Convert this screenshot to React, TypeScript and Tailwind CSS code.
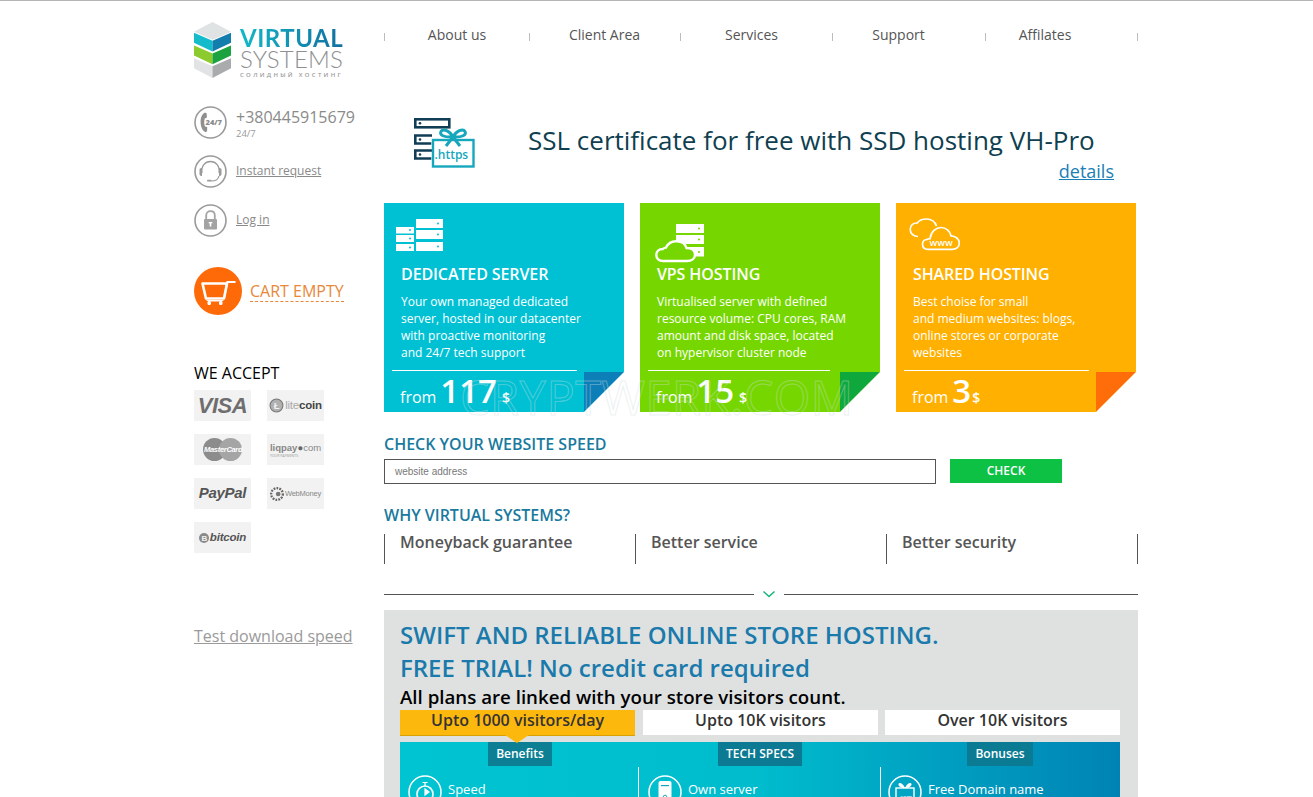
import React from "react";

const Cube = () => (
  <svg width="38" height="56" viewBox="0 0 38 57" preserveAspectRatio="none" className="shrink-0">
    <polygon points="18.5,0 37,10 18.5,18 0,10" fill="#dfe3e4" />
    <polygon points="0,11 18.5,19 18.5,30 0,21" fill="#14bccb" />
    <polygon points="37,11 18.5,19 18.5,30 37,21" fill="#137dae" />
    <polygon points="0,24 18.5,32 18.5,43 0,34" fill="#8ccb2e" />
    <polygon points="37,24 18.5,32 18.5,43 37,34" fill="#1ca23e" />
    <polygon points="0,37 18.5,45 18.5,57 0,47" fill="#e2e3e4" />
    <polygon points="37,37 18.5,45 18.5,57 37,47" fill="#a9abad" />
  </svg>
);

const Ring = ({ children }: { children: React.ReactNode }) => (
  <svg width="33" height="33" viewBox="0 0 33 33" className="shrink-0">
    <circle cx="16.5" cy="16.5" r="15.5" fill="none" stroke="#9a9a9a" strokeWidth="1.6" />
    {children}
  </svg>
);

const PhoneIcon = () => (
  <Ring>
    <path d="M11 6.500c-3.200 1.600-4.600 5.600-4.400 10 .2 4.600 1.900 8.400 4.900 9.700l1.600-.9.1-4.200-2.200-.7c-.9-1.800-1.100-5.800-.2-8l2.100-.8-.2-4.200z" fill="#8f8f8f" />
    <text x="11.500" y="19" fontSize="7.500" fontWeight="800" fill="#8a8a8a" fontFamily="'Open Sans',sans-serif">24/7</text>
  </Ring>
);

const HeadsetIcon = () => (
  <Ring>
    <path d="M8 18c-1-7 3-11.500 8.500-11.500S26 11 25 18" fill="none" stroke="#9a9a9a" strokeWidth="1.300" />
    <path d="M5.500 14.500c0-1 1-1.500 2.500-1.500v8c-1.500 0-2.500-.8-2.500-1.800zM27.500 14.500c0-1-1-1.500-2.500-1.500v8c1.500 0 2.500-.8 2.500-1.800z" fill="#9a9a9a" />
    <path d="M25 21c-.5 3-3.500 5-8 5" fill="none" stroke="#9a9a9a" strokeWidth="1.200" />
    <rect x="13" y="24.800" width="4.500" height="1.800" rx=".9" fill="#9a9a9a" />
  </Ring>
);

const LockIcon = () => (
  <Ring>
    <path d="M12.200 15v-3.500c0-2.600 1.800-4.300 4.300-4.300s4.300 1.700 4.300 4.300V15" fill="none" stroke="#a3a3a3" strokeWidth="1.800" />
    <rect x="10" y="15" width="13" height="10.500" rx="1" fill="#a3a3a3" />
    <rect x="15.700" y="18" width="1.600" height="4.500" fill="#fff" />
    <rect x="14.700" y="18" width="3.600" height="1.400" fill="#fff" />
  </Ring>
);

const CartIcon = () => (
  <svg width="48" height="48" viewBox="0 0 48 48" className="shrink-0">
    <circle cx="24" cy="24" r="24" fill="#ff6a08" />
    <path d="M8.500 16.500h24.500l-3 15H12z" fill="none" stroke="#fff" strokeWidth="2.600" strokeLinejoin="round" />
    <path d="M30 31.500l3.300-16.500h8.200" fill="none" stroke="#fff" strokeWidth="1.800" />
    <path d="M12 33h18l-2 1.500H14z" fill="#fff" />
    <rect x="13.500" y="34" width="3.500" height="4" rx="1.500" fill="#fff" />
    <rect x="25" y="34" width="3.500" height="4" rx="1.500" fill="#fff" />
  </svg>
);

const Tile = ({ children }: { children: React.ReactNode }) => (
  <div className="flex h-[31px] w-[57px] items-center justify-center overflow-hidden bg-[#f2f2f2] text-[#6f6f6f]">{children}</div>
);

const Logos = () => (
  <div className="mt-[7px] grid grid-cols-[57px_57px] gap-x-[16px] gap-y-[13px]">
    <Tile>
      <span className="font-['Liberation_Sans',sans-serif] text-[22px] font-bold italic tracking-[-0.5px] text-[#6e6e6e]">VISA</span>
    </Tile>
    <Tile>
      <svg width="15" height="15" viewBox="0 0 14 14" className="shrink-0">
        <circle cx="7" cy="7" r="6" fill="#b0b0b0" stroke="#777" />
        <text x="4.500" y="10.500" fontSize="9" fontWeight="700" fill="#f2f2f2" fontFamily="'Liberation Sans',sans-serif">Ł</text>
      </svg>
      <span className="ml-[1px] font-['Liberation_Sans',sans-serif] text-[11.500px] font-bold tracking-[-0.2px] text-[#444]"><span className="font-normal text-[#aaa]">lite</span>coin</span>
    </Tile>
    <Tile>
      <div className="relative flex h-[23px] w-[39px]">
        <span className="h-[23px] w-[23px] rounded-full bg-[#8c8c8c]" />
        <span className="-ml-[7px] h-[23px] w-[23px] rounded-full bg-[#a5a5a5]" />
        <span className="absolute left-[1px] top-[6px] font-['Liberation_Sans',sans-serif] text-[7.500px] font-bold italic tracking-[-0.3px] text-white">MasterCard</span>
      </div>
    </Tile>
    <Tile>
      <div className="flex flex-col items-start">
        <span className="font-['Liberation_Sans',sans-serif] text-[9.500px] leading-[11px] text-[#888]"><span className="font-bold">liqpay</span><span className="text-[#666]">●</span>com</span>
        <span className="text-[3.500px] leading-[5px] text-[#999]">YOUR PAYMENTS</span>
      </div>
    </Tile>
    <Tile>
      <span className="font-['Liberation_Sans',sans-serif] text-[15px] font-bold italic tracking-[-0.3px] text-[#555]">PayPal</span>
    </Tile>
    <Tile>
      <svg width="14" height="14" viewBox="0 0 12 12" className="shrink-0">
        <circle cx="6" cy="6" r="5" fill="none" stroke="#666" strokeWidth="2" strokeDasharray="1.500 1" />
        <circle cx="7" cy="6" r="2" fill="#777" />
      </svg>
      <span className="ml-[1px] font-['Liberation_Sans',sans-serif] text-[7.500px] tracking-[-0.2px] text-[#888]">WebMoney</span>
    </Tile>
    <Tile>
      <svg width="10" height="10" viewBox="0 0 10 10" className="mr-[1px] shrink-0">
        <circle cx="5" cy="5" r="5" fill="#8a8a8a" />
        <text x="2.500" y="8" fontSize="8" fontWeight="700" fill="#f2f2f2" fontFamily="'Liberation Sans',sans-serif">B</text>
      </svg>
      <span className="font-['Liberation_Sans',sans-serif] text-[11.500px] font-bold italic tracking-[-0.2px] text-[#555]">bitcoin</span>
    </Tile>
  </div>
);

const Sidebar = () => (
  <aside className="flex w-[190px] shrink-0 flex-col pt-[21px]">
    <div className="flex h-[56px] gap-[8px]">
      <Cube />
      <div className="flex w-[104px] flex-col pt-[6px]">
        <span className="bg-gradient-to-r from-[#14b8c8] to-[#126f9f] bg-clip-text font-['Lato',sans-serif] text-[24px] font-bold leading-[20px] tracking-[0.5px] text-transparent">VIRTUAL</span>
        <span className="font-['Lato',sans-serif] text-[24px] font-light leading-[22px] tracking-[0.2px] text-[#8d8f91]">SYSTEMS</span>
        <span className="mt-[1px] whitespace-nowrap font-['Open_Sans',sans-serif] text-[6px] font-semibold leading-[8px] tracking-[2.300px] text-[#9b9b9b]">СОЛИДНЫЙ ХОСТИНГ</span>
      </div>
    </div>
    <div className="mt-[28px] flex h-[33px] gap-[9px]">
      <PhoneIcon />
      <div className="flex flex-col">
        <span className="text-[16px] leading-[22px] text-[#8a8a8a]">+380445915679</span>
        <span className="text-[9.500px] leading-[11px] text-[#999]">24/7</span>
      </div>
    </div>
    <div className="mt-[16px] flex h-[33px] items-center gap-[9px]">
      <HeadsetIcon />
      <a className="mb-[2px] text-[12px] text-[#8a8a8a] underline">Instant request</a>
    </div>
    <div className="mt-[16px] flex h-[33px] items-center gap-[9px]">
      <LockIcon />
      <a className="mb-[2px] text-[12px] text-[#8a8a8a] underline">Log in</a>
    </div>
    <div className="mt-[30px] flex h-[48px] items-center gap-[8px]">
      <CartIcon />
      <span className="border-b border-dashed border-[#e8873a] text-[16px] leading-[20px] text-[#e8873a]">CART EMPTY</span>
    </div>
    <h3 className="mt-[48px] text-[16px] font-medium leading-[20px] text-black">WE ACCEPT</h3>
    <Logos />
    <a className="mt-[71px] text-[16px] leading-[24px] text-[#9a9a9a] underline">Test download speed</a>
  </aside>
);

const NavSep = () => <span className="mt-[10px] h-[8px] w-px shrink-0 bg-[#bdbdbd]" />;

const Nav = () => (
  <nav className="flex h-[24px] text-[14px] text-[#555]">
    <NavSep />
    <a className="w-[144px] text-center leading-[24px]">About us</a>
    <NavSep />
    <a className="w-[150px] pr-[1px] text-center leading-[24px]">Client Area</a>
    <NavSep />
    <a className="w-[151px] pr-[10px] text-center leading-[24px]">Services</a>
    <NavSep />
    <a className="w-[152px] pr-[21px] text-center leading-[24px]">Support</a>
    <NavSep />
    <a className="w-[151px] pr-[33px] text-center leading-[24px]">Affilates</a>
    <NavSep />
  </nav>
);

const HttpsIcon = () => (
  <svg width="61" height="50" viewBox="0 0 61 50" className="shrink-0">
    <g fill="none" stroke="#123e55" strokeWidth="2.600">
      <rect x="1.300" y="1.300" width="34" height="8" />
      <path d="M18 17.500H1.300v8h16M18 32.500H1.300v8h16" />
    </g>
    <circle cx="6" cy="5.300" r="1.300" fill="#123e55" />
    <circle cx="6" cy="21.500" r="1.300" fill="#123e55" />
    <circle cx="6" cy="36.500" r="1.300" fill="#123e55" />
    <rect x="19" y="22" width="40.500" height="26.500" fill="#fff" stroke="#17a7bd" strokeWidth="2.400" />
    <path d="M39 19c-3-6-10-9-12-5.500s3 6 12 5.500c9 .5 14-2 12-5.500s-9-.5-12 5.500zM39 19l-7 9M39 19l7 9" fill="#fff" stroke="#17a7bd" strokeWidth="3" />
    <text x="20.500" y="41" fontSize="12" fill="#17a7bd" fontWeight="600" fontFamily="'Open Sans',sans-serif">.https</text>
  </svg>
);

const Banner = () => (
  <div className="mt-[71px] flex h-[85px] shrink-0">
    <div className="ml-[30px] w-[114px]"><HttpsIcon /></div>
    <div className="flex w-[586px] flex-col">
      <div className="mt-[3px] whitespace-nowrap text-[26px] leading-[38px] text-[#0f3f50]">SSL certificate for free with SSD hosting VH-Pro</div>
      <a className="self-end text-[18px] leading-[24px] text-[#1a7fb5] underline">details</a>
    </div>
  </div>
);

const ServerIcon = ({ c }: { c: string }) => (
  <svg width="47" height="32" viewBox="0 0 47 32">
    <g fill="#fff">
      <rect x="20" y="0" width="27" height="9" />
      <rect x="20" y="11" width="27" height="9" />
      <rect x="20" y="23" width="27" height="9" />
      <rect x="0" y="8" width="18" height="6.500" />
      <rect x="0" y="16" width="18" height="7" />
      <rect x="0" y="25" width="18" height="7" />
    </g>
    <g fill={c}>
      <circle cx="42" cy="4.500" r="1" /><circle cx="42" cy="15.500" r="1" /><circle cx="42" cy="27.500" r="1" />
      <circle cx="14" cy="11" r="1" /><circle cx="14" cy="19.500" r="1" /><circle cx="14" cy="28.500" r="1" />
    </g>
  </svg>
);

const VpsIcon = ({ c }: { c: string }) => (
  <svg width="50" height="39" viewBox="0 0 50 39">
    <g fill="#fff">
      <rect x="21" y="0" width="28" height="9" />
      <rect x="21" y="11" width="28" height="9" />
      <rect x="21" y="23" width="28" height="9.500" />
    </g>
    <circle cx="44" cy="15.500" r="1" fill={c} /><circle cx="44" cy="4.500" r="1" fill={c} /><circle cx="44" cy="28" r="1" fill={c} />
    <path d="M8 37c-4 0-6.700-2.500-6.700-6s2.700-6 6.500-6c1-1 2-1.400 3.200-1.400C13 19 17 17 22 17.200c5 .2 8.500 3 9.500 6.800 5 0 8.500 2.500 8.500 6.500s-3.500 6.500-8 6.500z" fill={c} stroke="#fff" strokeWidth="2.400" />
  </svg>
);

const SharedIcon = ({ c }: { c: string }) => (
  <svg width="52" height="33" viewBox="0 0 52 33">
    <path d="M9 18.500c-4 0-7.800-2.600-7.800-7 0-4 3-6.800 7-6.500C10 2.500 14 1 17.500 1c5 0 8.500 2.800 10 7" fill="none" stroke="#fff" strokeWidth="1.700" />
    <path d="M19 31.300c-3.500 0-5.500-2-5.500-5s2.200-5 5-5c.5-.3 1.600-.7 2.500-.6C22 13.500 27 9.500 32 9.500c5 0 9 3.700 10 8.300 4.500.3 8.300 3.200 8.300 7.200 0 4-3 6.300-7 6.300z" fill={c} stroke="#fff" strokeWidth="1.700" />
    <text x="20.500" y="28" fontSize="9.500" fontWeight="600" fill="#fff" fontFamily="'Open Sans',sans-serif">www</text>
  </svg>
);

type CardProps = {
  bg: string;
  fold: string;
  icon: React.ReactNode;
  iconBox: string;
  title: string;
  lines: string[];
  price: string;
  priceGap: string;
  ruleW: string;
};

const Fold = ({ fold }: { fold: string }) => (
  <svg width="40" height="40" viewBox="0 0 40 40" className="absolute bottom-0 right-0">
    <polygon points="0,0 40,0 0,40" fill={fold} />
    <polygon points="40,0 40,40 0,40" fill="#fff" />
  </svg>
);

const Card = ({ bg, fold, icon, iconBox, title, lines, price, priceGap, ruleW }: CardProps) => (
  <div className="relative flex h-[209px] w-[240px] flex-col text-white" style={{ background: bg }}>
    <div className={iconBox}>{icon}</div>
    <h3 className="ml-[17px] mt-[1px] text-[16px] font-semibold leading-[22px] tracking-[-0.1px]">{title}</h3>
    <div className="ml-[17px] mt-[8px] whitespace-nowrap text-[12px] leading-[17px]">
      {lines.map((l) => (
        <div key={l}>{l}</div>
      ))}
    </div>
    <div className={`ml-[8px] mt-[9px] h-px bg-white ${ruleW}`} />
    <div className="ml-[16px] flex h-[39px] items-end pb-[2px]">
      <span className="text-[16px] leading-[22px]">from</span>
      <span className="-mb-[2px] ml-[4px] text-[33px] font-semibold leading-[38px]">{price}</span>
      <span className={`${priceGap} text-[14px] font-semibold leading-[20px]`}>$</span>
    </div>
    <Fold fold={fold} />
  </div>
);

const Cards = () => (
  <div className="relative flex w-[752px] gap-[16px]">
    <Card
      bg="#00c1d4"
      fold="#0d7fb8"
      icon={<ServerIcon c="#00c1d4" />}
      iconBox="ml-[12px] mt-[16px] h-[43px]"
      title="DEDICATED SERVER"
      lines={["Your own managed dedicated", "server, hosted in our datacenter", "with proactive monitoring", "and 24/7 tech support"]}
      price="117"
      priceGap="ml-[5px]"
      ruleW="w-[185px]"
    />
    <Card
      bg="#76d700"
      fold="#0fa83d"
      icon={<VpsIcon c="#76d700" />}
      iconBox="ml-[15px] mt-[21px] h-[38px]"
      title="VPS HOSTING"
      lines={["Virtualised server with defined", "resource volume: CPU cores, RAM", "amount and disk space, located", "on hypervisor cluster node"]}
      price="15"
      priceGap="ml-[5px]"
      ruleW="w-[182px]"
    />
    <Card
      bg="#ffb000"
      fold="#ff6d0a"
      icon={<SharedIcon c="#ffb000" />}
      iconBox="ml-[13px] mt-[15px] h-[44px]"
      title="SHARED HOSTING"
      lines={["Best choise for small", "and medium websites: blogs,", "online stores or corporate", "websites"]}
      price="3"
      priceGap="ml-[1px]"
      ruleW="w-[185px]"
    />
    <span className="pointer-events-none absolute left-[76px] top-[169px] whitespace-nowrap font-['Open_Sans',sans-serif] text-[47px] font-normal leading-[50px] tracking-[0.5px] text-transparent [-webkit-text-stroke:1px_rgba(205,220,220,0.4)]">CRYPTWERK.COM</span>
  </div>
);

const Speed = () => (
  <>
    <h2 className="mt-[20px] text-[16px] font-semibold leading-[24px] text-[#1a7a9e]">CHECK YOUR WEBSITE SPEED</h2>
    <div className="mt-[3px] flex h-[25px] gap-[14px]">
      <div className="flex h-[25px] w-[552px] items-center border border-[#555] pl-[10px] font-['Liberation_Sans',sans-serif] text-[10px] text-[#777]">website address</div>
      <button className="h-[24px] w-[112px] bg-[#0cc144] text-[12px] font-semibold text-white">CHECK</button>
    </div>
  </>
);

const Why = () => (
  <>
    <h2 className="mt-[19px] text-[16px] font-semibold leading-[24px] text-[#1a7a9e]">WHY VIRTUAL SYSTEMS?</h2>
    <div className="mt-[7px] flex h-[30px] w-[754px] border-r border-[#555] text-[16px] font-semibold text-[#555]">
      {["Moneyback guarantee", "Better service", "Better security"].map((t) => (
        <div key={t} className="w-[251px] border-l border-[#555] pl-[15px] leading-[17px]">{t}</div>
      ))}
    </div>
    <div className="mt-[20px] flex h-[20px] w-[754px] items-center">
      <span className="h-px flex-1 bg-[#555]" />
      <svg width="30" height="20" viewBox="0 0 30 20" className="shrink-0">
        <path d="M9.500 7.500l5.500 5 5.500-5" fill="none" stroke="#17b57a" strokeWidth="1.500" />
      </svg>
      <span className="h-px w-[354px] bg-[#555]" />
    </div>
  </>
);

const Circle = ({ children }: { children: React.ReactNode }) => (
  <svg width="34" height="34" viewBox="0 0 34 34" className="shrink-0">
    <circle cx="17" cy="17" r="16" fill="none" stroke="#fff" strokeWidth="1.500" />
    {children}
  </svg>
);

const Feature = ({ icon, label, box }: { icon: React.ReactNode; label: string; box: string }) => (
  <div className={`flex h-[60px] items-start gap-[6px] pt-[8px] ${box}`}>
    {icon}
    <span className="mt-[4px] text-[13px] font-medium leading-[20px] text-white">{label}</span>
  </div>
);

const Panel = () => (
  <section className="mt-[6px] h-[300px] w-[754px] bg-[#dfe1e1] px-[16px] pt-[8px]">
    <h2 className="whitespace-nowrap text-[24px] font-semibold leading-[33px] text-[#1a7aab]">SWIFT AND RELIABLE ONLINE STORE HOSTING.</h2>
    <h2 className="whitespace-nowrap text-[24px] font-semibold leading-[33px] text-[#1a7aab]">FREE TRIAL! No credit card required</h2>
    <p className="mt-[1px] whitespace-nowrap text-[18.700px] font-semibold leading-[24px] text-black">All plans are linked with your store visitors count.</p>
    <div className="mt-[1px] flex text-[16px] font-semibold text-[#333]">
      <div className="relative h-[25px] w-[235px] bg-[#fdb80e] text-center leading-[20px] shadow-[0_1px_0_#d8a000]">
        Upto 1000 visitors/day
        <span className="absolute left-[105px] top-[25px] h-0 w-0 border-x-[12px] border-t-[8px] border-x-transparent border-t-[#fdb80e]" />
      </div>
      <div className="ml-[8px] h-[25px] w-[235px] bg-white text-center leading-[20px]">Upto 10K visitors</div>
      <div className="ml-[7px] h-[25px] w-[235px] bg-white text-center leading-[20px]">Over 10K visitors</div>
    </div>
    <div className="mt-[7px] h-[120px] w-[720px] bg-gradient-to-r from-[#00c4d1] via-[#00bccd] to-[#0083b4]">
      <div className="grid grid-cols-3">
        <div className="flex justify-center"><span className="h-[24px] w-[64px] bg-[#0d7f95] text-center text-[12px] font-semibold leading-[23px] text-white">Benefits</span></div>
        <div className="flex justify-center"><span className="h-[24px] w-[84px] bg-[#0c7a92] text-center text-[12px] font-semibold leading-[23px] text-white">TECH SPECS</span></div>
        <div className="flex justify-center"><span className="h-[24px] w-[66px] bg-[#0a7b93] text-center text-[12px] font-semibold leading-[23px] text-white">Bonuses</span></div>
      </div>
      <div className="mt-[1px] grid grid-cols-[238px_242px_240px]">
        <Feature
          box="pl-[8px]"
          label="Speed"
          icon={
            <Circle>
              <circle cx="17" cy="19" r="8" fill="none" stroke="#fff" strokeWidth="1.600" />
              <path d="M14.500 7.500h5M17 8v3M17 14l4 3-4 3z" fill="#fff" stroke="#fff" strokeWidth="1.200" />
            </Circle>
          }
        />
        <Feature
          box="border-l border-white pl-[9px]"
          label="Own server"
          icon={
            <Circle>
              <rect x="10.500" y="6" width="13" height="22" rx="2" fill="#fff" />
              <rect x="13" y="10" width="8" height="1.200" fill="#17a7bd" />
              <circle cx="17" cy="22" r="1.800" fill="none" stroke="#17a7bd" />
            </Circle>
          }
        />
        <Feature
          box="border-l border-white pl-[7px]"
          label="Free Domain name"
          icon={
            <Circle>
              <rect x="8" y="13" width="18" height="14" fill="none" stroke="#fff" strokeWidth="1.400" />
              <path d="M17 13c-2-5-6-6-6.500-4S13 13 17 13c4 0 7-2 6.500-4S19 8 17 13z" fill="#fff" />
              <text x="10.500" y="24" fontSize="6" fill="#fff" fontFamily="'Open Sans',sans-serif">.com</text>
            </Circle>
          }
        />
      </div>
    </div>
  </section>
);

export default function App() {
  return (
    <div className="h-[797px] w-[1313px] overflow-hidden border-t border-[#b5b5b5] bg-white font-['Open_Sans',sans-serif]">
      <div className="ml-[194px] flex">
        <Sidebar />
        <main className="flex w-[754px] flex-col pt-[22px]">
          <Nav />
          <Banner />
          <Cards />
          <Speed />
          <Why />
          <Panel />
        </main>
      </div>
    </div>
  );
}
